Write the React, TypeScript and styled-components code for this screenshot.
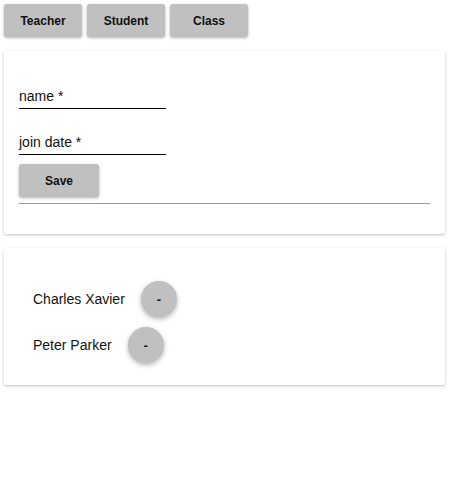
import styled, { createGlobalStyle } from "styled-components";

const GlobalStyle = createGlobalStyle`
	body {
		margin: 0;
		background: #fff;
		font-family: "Liberation Sans", Arial, sans-serif;
		color: #111;
	}
`;

const Page = styled.div`
	padding: 4px;
`;

const Nav = styled.nav`
	display: flex;
	gap: 5px;
`;

const GrayButton = styled.button<{ $width?: number }>`
	width: ${({ $width }) => $width ?? 78}px;
	height: 33px;
	border: none;
	border-radius: 3px;
	background: #c0c0c0;
	box-shadow: 0 1px 3px rgba(0, 0, 0, 0.3);
	font-family: inherit;
	font-size: 12px;
	font-weight: 700;
	color: #111;
	cursor: pointer;
`;

const Card = styled.section`
	margin-top: 14px;
	background: #fff;
	border-radius: 2px;
	box-shadow: 0 1px 3px rgba(0, 0, 0, 0.25);
`;

const FormCard = styled(Card)`
	padding: 37px 15px 30px;
`;

const Field = styled.label`
	display: block;
	width: 147px;
	font-size: 14px;
	line-height: 16px;
	padding-bottom: 4px;
	border-bottom: 1px solid #000;

	& + & {
		margin-top: 25px;
	}
`;

const SaveRow = styled.div`
	margin-top: 9px;
`;

const Divider = styled.hr`
	margin: 6px 0 0;
	border: none;
	border-top: 1px solid #999;
`;

const ListCard = styled(Card)`
	padding: 33px 29px 22px;
	display: flex;
	flex-direction: column;
	gap: 10px;
`;

const Row = styled.div`
	display: flex;
	align-items: center;
	gap: 16px;
	font-size: 14px;
`;

const RoundButton = styled.button`
	width: 36px;
	height: 36px;
	border: none;
	border-radius: 50%;
	background: #c0c0c0;
	box-shadow: 0 2px 5px rgba(0, 0, 0, 0.3);
	font-family: inherit;
	font-size: 13px;
	font-weight: 700;
	color: #111;
	padding: 0;
	cursor: pointer;
`;

const people = ["Charles Xavier", "Peter Parker"];

const App = () => {
	return (
		<Page>
			<GlobalStyle />
			<Nav>
				<GrayButton>Teacher</GrayButton>
				<GrayButton>Student</GrayButton>
				<GrayButton>Class</GrayButton>
			</Nav>

			<FormCard>
				<Field>name *</Field>
				<Field>join date *</Field>
				<SaveRow>
					<GrayButton $width={80}>Save</GrayButton>
				</SaveRow>
				<Divider />
			</FormCard>

			<ListCard>
				{people.map((p) => (
					<Row key={p}>
						<span>{p}</span>
						<RoundButton>-</RoundButton>
					</Row>
				))}
			</ListCard>
		</Page>
	);
};

export default App;
